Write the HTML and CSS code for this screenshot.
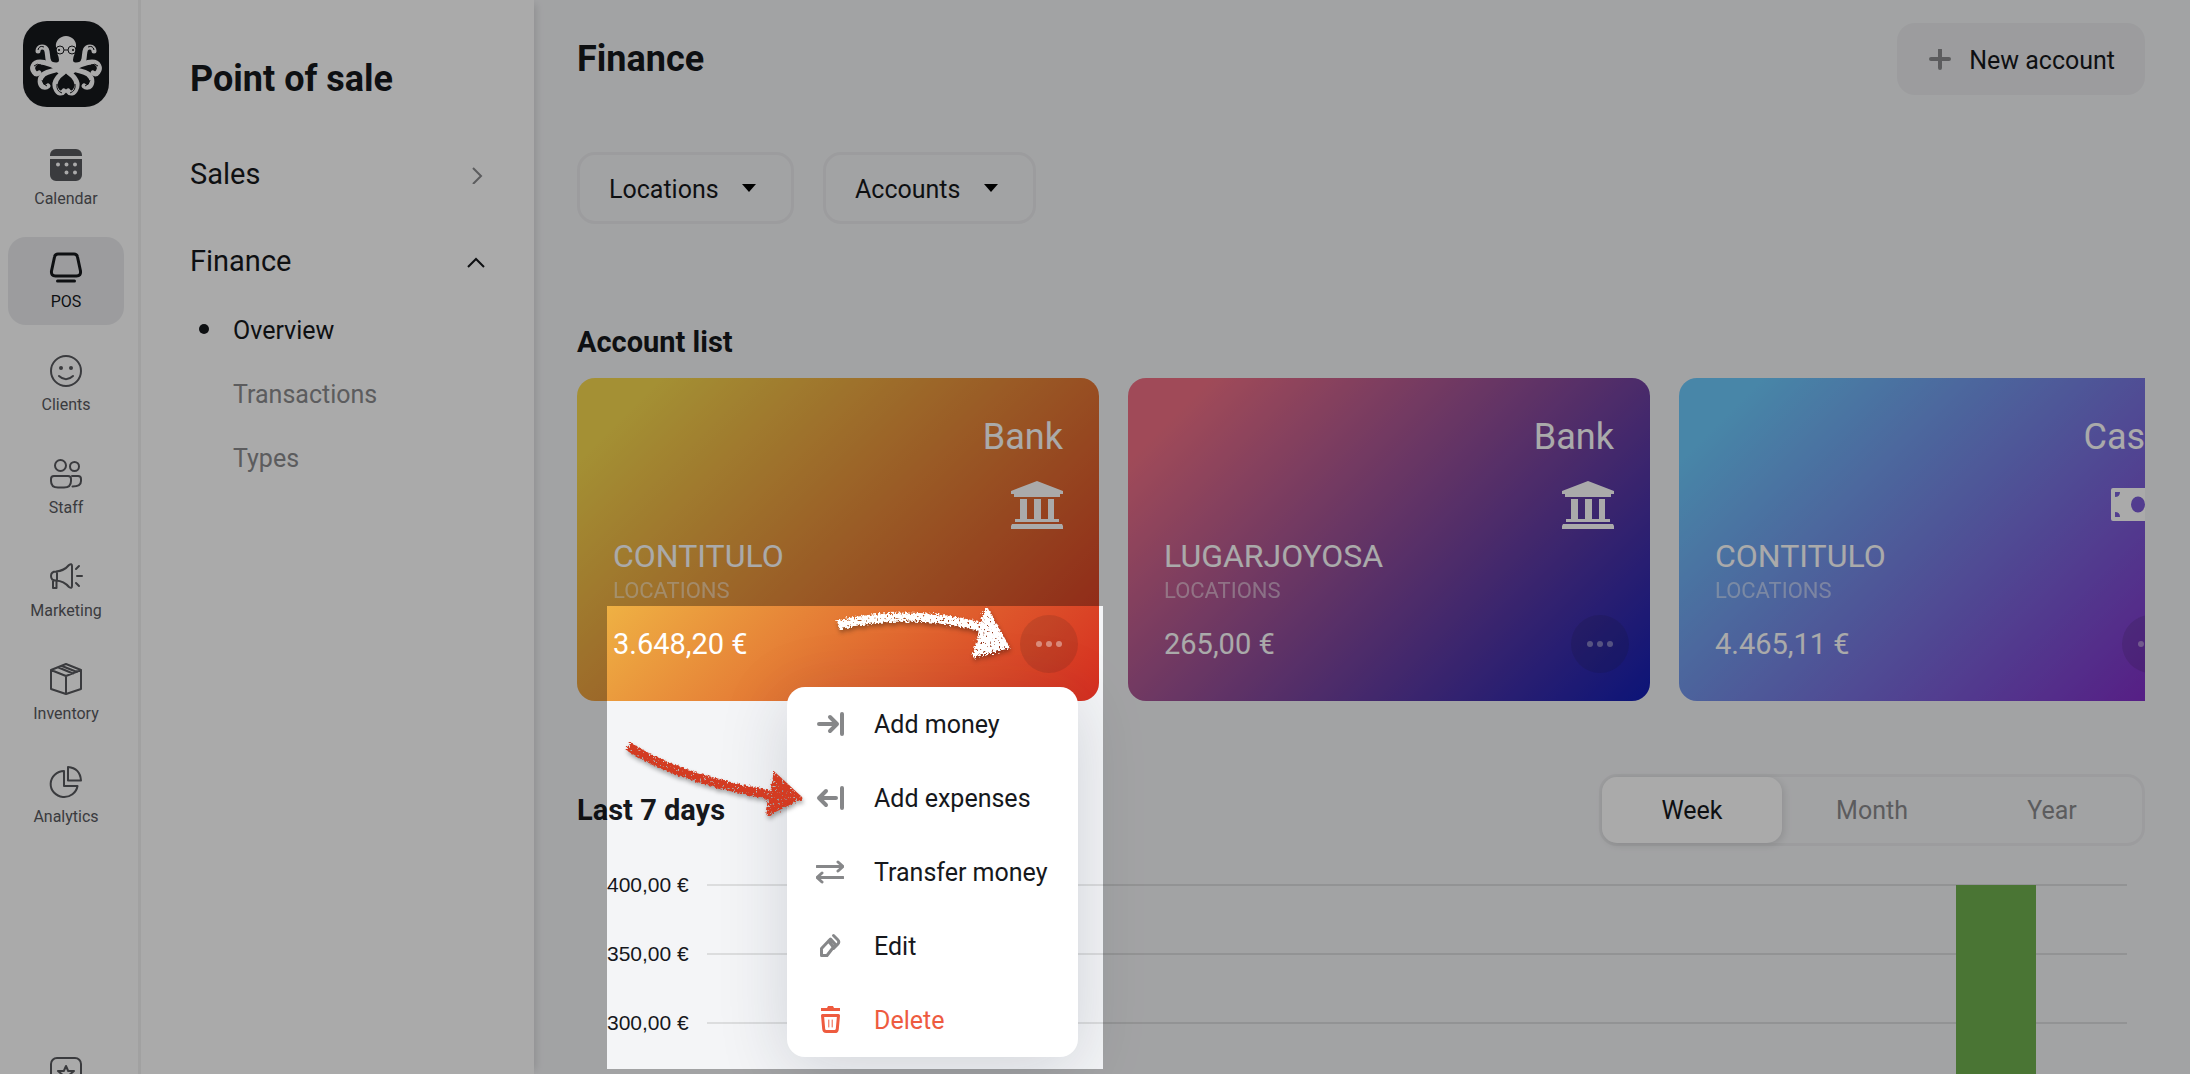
FILE: index.html
```html
<!DOCTYPE html>
<html lang="en">
<head>
    <meta charset="UTF-8">
    <meta name="viewport" content="width=device-width, initial-scale=1.0">
    <title>Finance - Point of sale</title>
    <link rel="stylesheet" href="styles.css">
</head>
<body>
    <div class="app">
        <nav class="rail">
            <a class="logo" href="#" aria-label="Home">
                <svg viewBox="7 7 86 86">
                    <g class="arms">
                        <path d="M46 51C37 51 33 51 32 45C31 39 32 33 26 33C23 33 22 35 22 37"/>
                        <path d="M44 53C35 52 31 48 24 48C17 48 15 54 18 58Q20 61 23 59"/>
                        <path d="M46 55C38 56 33 57 28 60C22 65 24 71 27 73Q30 74 32 72"/>
                        <path d="M48 58C41 63 37 69 40 75C42 80 46 80 48 77"/>
                        <path d="M54 51C63 51 67 51 68 45C69 39 68 33 74 33C77 33 78 35 78 37"/>
                        <path d="M56 53C65 52 69 48 76 48C83 48 85 54 82 58Q80 61 77 59"/>
                        <path d="M54 55C62 56 67 57 72 60C78 65 76 71 73 73Q70 74 68 72"/>
                        <path d="M52 58C59 63 63 69 60 75C58 80 54 80 52 77"/>
                    </g>
                    <path class="head" d="M50 22C44 22 39 27 40 33C40 38 43 42 43 46C43 50 37 49 34 52L43 60L48 61L50 57L52 61L57 60L66 52C63 49 57 50 57 46C57 42 60 38 60 33C61 27 56 22 50 22Z"/>
                    <g class="curls">
                        <path d="M22 36Q23 31 28 33"/>
                        <path d="M78 36Q77 31 72 33"/>
                        <path d="M18 52Q21 49 25 51M82 52Q79 49 75 51"/>
                        <path d="M26 66Q27 71 31 72M74 66Q73 71 69 72"/>
                        <path d="M41 70Q40 77 46 79M59 70Q60 77 54 79"/>
                    </g>
                    <g class="glasses">
                        <circle cx="44" cy="36" r="4"/>
                        <circle cx="56" cy="36" r="4"/>
                        <path d="M48 36h4M38 35l2 0M60 35l2 0"/>
                    </g>
                    <circle cx="43" cy="36" r="1"/>
                    <circle cx="57" cy="36" r="1"/>
                </svg>
            </a>
            <a class="rail-item" href="#">
                <svg class="rail-icon" viewBox="0 0 32 32">
                    <path class="solid" d="M0 7V6a6 6 0 0 1 6-6h20a6 6 0 0 1 6 6v1z"/>
                    <path class="solid" fill-rule="evenodd" d="M0 10h32v16a6 6 0 0 1-6 6H6a6 6 0 0 1-6-6zM8 13.500a2 2 0 1 0 0 4a2 2 0 1 0 0-4M16.500 13.500a2 2 0 1 0 0 4a2 2 0 1 0 0-4M25 13.500a2 2 0 1 0 0 4a2 2 0 1 0 0-4M16.500 21.500a2 2 0 1 0 0 4a2 2 0 1 0 0-4M25 21.500a2 2 0 1 0 0 4a2 2 0 1 0 0-4"/>
                </svg>
                Calendar
            </a>
            <a class="rail-item active" href="#">
                <svg class="rail-icon bold" viewBox="0 0 32 32">
                    <path d="M8 2h16q3 0 3.500 3l3 14q.6 5-4 5h-21q-4.600 0-4-5l3-14Q5 2 8 2z"/>
                    <path d="M7.500 29h17"/>
                </svg>
                POS
            </a>
            <a class="rail-item" href="#">
                <svg class="rail-icon" viewBox="0 0 32 32">
                    <circle cx="16" cy="16" r="15"/>
                    <circle class="solid" cx="11" cy="13" r="2"/>
                    <circle class="solid" cx="21" cy="13" r="2"/>
                    <path d="M9 21q7 6.500 14 0"/>
                </svg>
                Clients
            </a>
            <a class="rail-item" href="#">
                <svg class="rail-icon" viewBox="0 0 32 32">
                    <circle cx="10.500" cy="7.500" r="5.500"/>
                    <circle cx="24.500" cy="8.500" r="4.500"/>
                    <path d="M4 18h14q3 0 3 3v2q0 6.500-7 6.500H8q-7 0-7-6.500v-2q0-3 3-3z"/>
                    <path d="M22 18h6q3 0 3 3v2q0 5.500-8.500 5.500"/>
                </svg>
                Staff
            </a>
            <a class="rail-item" href="#">
                <svg class="rail-icon" viewBox="0 0 32 32">
                    <path d="M6 10.500Q14 10 19 4q3-2 3 1v20q0 3-3 1q-5-6-13-6.500q-5 0-5-4.500t5-4.500zM7 10.500v9M3 20v7h3.500v-7M26 8l3-3M27 15h5M26 22l3 3"/>
                </svg>
                Marketing
            </a>
            <a class="rail-item" href="#">
                <svg class="rail-icon" viewBox="0 0 32 32">
                    <path d="M16 0L31 6v19L16 30L1 25V6zM1 6l15 6L31 6M16 12v18M8.500 3.500L23 9.500M12 2L27 8"/>
                </svg>
                Inventory
            </a>
            <a class="rail-item" href="#">
                <svg class="rail-icon" viewBox="0 0 32 32">
                    <path d="M14 4v15h13.500A13.500 13 0 1 1 14 4zM18 0q12 1 13 13.500H18z"/>
                </svg>
                Analytics
            </a>
            <a class="rail-item rail-last" href="#" aria-label="Favourites">
                <svg class="rail-icon" viewBox="0 0 32 32">
                    <rect x="1" y="1" width="30" height="30" rx="6"/>
                    <path d="M16 9l2.200 5h5.800l-4.500 3.800 1.500 5.600-5-3.200-5 3.200 1.500-5.600L8 14h5.800z"/>
                </svg>
            </a>
        </nav>

        <aside class="sidebar">
            <h2 class="sidebar-title">Point of sale</h2>
            <a class="group" href="#">
                Sales
                <svg class="chevron muted" viewBox="0 0 20 20"><path d="M8 4l8 8-8 8"/></svg>
            </a>
            <a class="group" href="#">
                Finance
                <svg class="chevron" viewBox="0 0 20 20"><path d="M3 16l8-8 8 8"/></svg>
            </a>
            <ul class="sub">
                <li class="current"><a href="#">Overview</a></li>
                <li><a href="#">Transactions</a></li>
                <li><a href="#">Types</a></li>
            </ul>
        </aside>

        <main class="content">
            <header class="top">
                <h1>Finance</h1>
                <button class="new-account" type="button">
                    <svg viewBox="0 0 22 22"><path d="M11 1v18M2 10h18"/></svg>
                    New account
                </button>
            </header>

            <div class="filters">
                <div class="filter">
                    <select aria-label="Locations"><option>Locations</option></select>
                    <svg viewBox="0 0 14 8"><path d="M0 0h14L7 8z"/></svg>
                </div>
                <div class="filter">
                    <select aria-label="Accounts"><option>Accounts</option></select>
                    <svg viewBox="0 0 14 8"><path d="M0 0h14L7 8z"/></svg>
                </div>
            </div>

            <h3>Account list</h3>
            <div class="cards">
                <article class="card gold">
                    <div class="card-type">
                        Bank
                        <svg viewBox="0 0 52 48"><path d="M26 0L52 10v3h-3v3H3v-3H0v-3zM9 18h7v20h7V18h7v20h7V18h6v20h5v3H4v-3h5zM1 43h50l1 2v3H0v-3z"/></svg>
                    </div>
                    <div class="card-name">CONTITULO</div>
                    <div class="card-place">LOCATIONS</div>
                    <div class="card-foot">
                        3.648,20 €
                        <button class="more" type="button" aria-label="More"><i></i><i></i><i></i></button>
                    </div>
                </article>
                <article class="card plum">
                    <div class="card-type">
                        Bank
                        <svg viewBox="0 0 52 48"><path d="M26 0L52 10v3h-3v3H3v-3H0v-3zM9 18h7v20h7V18h7v20h7V18h6v20h5v3H4v-3h5zM1 43h50l1 2v3H0v-3z"/></svg>
                    </div>
                    <div class="card-name">LUGARJOYOSA</div>
                    <div class="card-place">LOCATIONS</div>
                    <div class="card-foot">
                        265,00 €
                        <button class="more" type="button" aria-label="More"><i></i><i></i><i></i></button>
                    </div>
                </article>
                <article class="card sky">
                    <div class="card-type">
                        Cash
                        <svg viewBox="0 0 52 48"><path fill-rule="evenodd" d="M0 7h50q2 0 2 2v29q0 2-2 2H0q-2 0-2-2V9q0-2 2-2zM2 11v5q5 0 5-5zM2 36h5q0-5-5-5zM48 11h-5q0 5 5 5zM48 36v-5q-5 0-5 5zM25 15.500a7 8 0 1 0 0 16a7 8 0 1 0 0-16z"/></svg>
                    </div>
                    <div class="card-name">CONTITULO</div>
                    <div class="card-place">LOCATIONS</div>
                    <div class="card-foot">
                        4.465,11 €
                        <button class="more" type="button" aria-label="More"><i></i><i></i><i></i></button>
                    </div>
                </article>
            </div>

            <div class="period">
                <h3>Last 7 days</h3>
                <div class="switch">
                    <button class="on" type="button">Week</button>
                    <button type="button">Month</button>
                    <button type="button">Year</button>
                </div>
            </div>

            <div class="chart">
                <div class="tick">400,00 €</div>
                <div class="tick">350,00 €</div>
                <div class="tick">300,00 €</div>
                <div class="plot"><div class="bar"></div></div>
            </div>
        </main>

        <div class="menu">
            <button type="button">
                <svg viewBox="0 0 28 28"><path d="M3 14h17M14 7l7 7-7 7M26 4v20"/></svg>
                Add money
            </button>
            <button type="button">
                <svg viewBox="0 0 28 28"><path d="M20 14H3M10 7l-7 7 7 7M26 4v20"/></svg>
                Add expenses
            </button>
            <button type="button">
                <svg class="thin" viewBox="0 0 28 28"><path d="M1 8.500h25M22 4l5 4.500-5 4.500M27 19.500H2M6 15l-5 4.500 5 4.500"/></svg>
                Transfer money
            </button>
            <button type="button">
                <svg class="thin" viewBox="0 0 28 28"><path d="M5.500 23.500v-7l9-9.500 5 5.500-8.500 11zM12.500 9l4 5M17.500 3.500l4 4q2.500 2.500 0 5l-4 4"/></svg>
                Edit
            </button>
            <button class="danger" type="button">
                <svg class="thin" viewBox="0 0 28 28">
                    <path class="fill" d="M5 2h6l1-2h5l1 2h6v3H5z"/>
                    <path d="M6.500 9.500h16l-1.200 13.500q-.2 2.500-2.500 2.500h-8.600q-2.300 0-2.500-2.500z"/>
                    <path class="hair" d="M12.800 14v7M16.200 14v7"/>
                </svg>
                Delete
            </button>
        </div>

        <div class="spotlight"></div>

        <!-- hand drawn arrows -->
        <svg class="arrow to-more" viewBox="0 0 190 60">
            <defs>
                <filter id="chalk" x="-10%" y="-20%" width="120%" height="140%">
                    <feTurbulence type="fractalNoise" baseFrequency="0.45" numOctaves="2" seed="4" result="n"/>
                    <feDisplacementMap in="SourceGraphic" in2="n" scale="7" result="d"/>
                    <feColorMatrix in="n" type="matrix" values="0 0 0 0 0  0 0 0 0 0  0 0 0 0 0  0 -10 0 0 7.400" result="m"/>
                    <feComposite in="d" in2="m" operator="in"/>
                </filter>
            </defs>
            <g filter="url(#chalk)">
                <path class="line" d="M8 25Q80 8 152 27"/>
                <path class="tip" d="M156 8L178 47L144 56Z"/>
            </g>
        </svg>
        <svg class="arrow to-expenses" viewBox="0 0 190 90">
            <g filter="url(#chalk)">
                <path class="line" d="M8 16Q54 47 150 65"/>
                <path class="tip" d="M155 44L181 68L148 84Z"/>
            </g>
        </svg>
    </div>
</body>
</html>
```
FILE: styles.css
```css
* {
    box-sizing: border-box;
}
body {
    margin: 0;
    font-family: Roboto, "Liberation Sans", sans-serif;
    font-size: 25px;
    color: #16181c;
    background: #f4f5f7;
}
a {
    color: inherit;
    text-decoration: none;
}
button, select {
    font: inherit;
    color: inherit;
    border: 0;
    background: none;
    padding: 0;
    cursor: pointer;
}
h1, h2, h3 {
    margin: 0;
    font-weight: bold;
}
h1, h2 {
    font-size: 36px;
    line-height: 42px;
}
h3 {
    font-size: 29px;
    line-height: 36px;
}
.app {
    position: relative;
    display: flex;
    height: 100vh;
    overflow: hidden;
}

/* left icon rail */
.rail {
    flex: none;
    width: 141px;
    display: flex;
    flex-direction: column;
    gap: 15px;
    padding: 21px 14px 0 8px;
    background: #fff;
    border-right: 3px solid #f2f2f2;
    overflow: hidden;
}
.logo {
    flex: none;
    width: 86px;
    height: 86px;
    margin: 0 auto 12px;
    border-radius: 24px;
    background: #16181c;
}
.logo svg {
    display: block;
}
.arms {
    fill: none;
    stroke: #fff;
    stroke-width: 5;
    stroke-linecap: round;
}
.head {
    fill: #fff;
}
.curls, .glasses {
    fill: none;
    stroke: #16181c;
    stroke-width: 1;
}
.rail-item {
    flex: none;
    height: 88px;
    display: flex;
    flex-direction: column;
    align-items: center;
    gap: 8px;
    padding-top: 15px;
    border-radius: 18px;
    font-size: 16px;
    line-height: 20px;
    color: #58595e;
}
.rail-item.active {
    background: #eaebee;
    color: #16181c;
}
.rail-icon {
    width: 32px;
    height: 32px;
    fill: none;
    stroke: currentColor;
    stroke-width: 2;
    stroke-linecap: round;
    stroke-linejoin: round;
    overflow: visible;
}
.rail-icon.bold {
    stroke-width: 3;
}
.rail-icon .solid {
    fill: currentColor;
    stroke: none;
}
.rail-last {
    margin-top: 187px;
}

/* section menu */
.sidebar {
    flex: none;
    width: 393px;
    padding: 58px 49px 0;
    background: #fff;
    box-shadow: 6px 0 8px -4px rgba(0, 0, 0, 0.12);
    z-index: 1;
}
.sidebar-title {
    margin-bottom: 54px;
}
.group {
    display: flex;
    justify-content: space-between;
    align-items: center;
    margin-bottom: 47px;
    font-size: 29px;
    line-height: 40px;
}
.group + .group {
    margin-bottom: 34px;
}
.chevron {
    width: 20px;
    height: 20px;
    fill: none;
    stroke: currentColor;
    stroke-width: 2;
}
.chevron.muted {
    stroke: #8a8b8d;
}
.sub {
    display: flex;
    flex-direction: column;
    gap: 32px;
    margin: 0;
    padding: 0 0 0 43px;
    list-style: none;
    line-height: 32px;
    color: #8a8b8d;
}
.sub .current {
    position: relative;
    color: #16181c;
}
.sub .current::before {
    content: "";
    position: absolute;
    left: -34px;
    top: 9px;
    width: 10px;
    height: 10px;
    border-radius: 50%;
    background: currentColor;
}

/* content */
.content {
    flex: 1;
    min-width: 0;
    display: flex;
    flex-direction: column;
    padding: 23px 45px 0 43px;
}
.top, .period {
    display: flex;
    justify-content: space-between;
    align-items: center;
}
.new-account {
    display: flex;
    align-items: center;
    gap: 18px;
    height: 72px;
    padding: 2px 30px 0 32px;
    border-radius: 18px;
    background: #eaebed;
}
.new-account svg {
    width: 22px;
    height: 22px;
    stroke: #8a8b8d;
    stroke-width: 4;
    stroke-linecap: round;
}
.filters {
    display: flex;
    gap: 29px;
    margin: 57px 0 100px;
}
.filter {
    position: relative;
}
.filter select {
    height: 72px;
    padding: 2px 72px 0 29px;
    border: 3px solid #eaebed;
    border-radius: 18px;
    appearance: none;
}
.filter svg {
    position: absolute;
    right: 38px;
    top: 32px;
    width: 14px;
    height: 8px;
    pointer-events: none;
}
.cards {
    display: flex;
    gap: 29px;
    margin: 18px 0 73px;
    overflow: hidden;
}
.card {
    flex: none;
    width: 522px;
    height: 323px;
    display: flex;
    flex-direction: column;
    padding: 38px 21px 0 36px;
    border-radius: 18px;
    color: #fff;
}
.gold {
    background: linear-gradient(135deg, #f6d84e 10%, #d62d20);
}
.plum {
    background: linear-gradient(135deg, #f07085 10%, #121eb4);
}
.sky {
    background: linear-gradient(135deg, #6cc9fc 10%, #8322c4);
}
.card-type {
    display: flex;
    flex-direction: column;
    align-items: flex-end;
    gap: 23px;
    padding-right: 15px;
    font-size: 36px;
    line-height: 42px;
}
.card-type svg {
    width: 52px;
    height: 48px;
    fill: currentColor;
    overflow: visible;
}
.card-name {
    margin-top: 7px;
    font-size: 32px;
    line-height: 40px;
}
.card-place {
    font-size: 22px;
    line-height: 30px;
    opacity: 0.5;
}
.card-foot {
    display: flex;
    justify-content: space-between;
    align-items: center;
    margin-top: 9px;
    font-size: 29px;
    line-height: 58px;
}
.more {
    width: 58px;
    height: 58px;
    display: flex;
    align-items: center;
    justify-content: center;
    gap: 4px;
    border-radius: 50%;
    background: rgba(22, 24, 28, 0.12);
}
.more i {
    width: 6px;
    height: 6px;
    border-radius: 50%;
    background: #fff;
    opacity: 0.4;
}
.switch {
    display: flex;
    width: 546px;
    height: 72px;
    border: 3px solid #eaebed;
    border-radius: 18px;
    color: #8a8b8d;
}
.switch button {
    flex: 1;
    border-radius: 15px;
}
.switch .on {
    background: #fff;
    color: #16181c;
    box-shadow: 2px 2px 8px rgba(0, 0, 0, 0.12);
}

/* chart */
.chart {
    position: relative;
    flex: 1;
    margin-top: 4px;
    padding: 0 18px 0 30px;
    font-family: "Liberation Sans", sans-serif;
    font-size: 21px;
}
.tick {
    display: flex;
    align-items: center;
    gap: 18px;
    height: 69px;
}
.tick::after {
    content: "";
    flex: 1;
    height: 2px;
    background: #dcddde;
}
.plot {
    position: absolute;
    inset: 35px 18px 0 129px;
}
.bar {
    height: 100%;
    width: 80px;
    margin-left: 88%;
    background: #6fb04e;
}

/* account menu */
.menu {
    position: absolute;
    left: 787px;
    top: 687px;
    width: 291px;
    border-radius: 18px;
    background: #fff;
    box-shadow: 0 12px 70px rgba(22, 40, 60, 0.16);
}
.menu button {
    display: flex;
    align-items: center;
    gap: 30px;
    width: 100%;
    height: 74px;
    padding-left: 29px;
    border-radius: 18px;
}
.menu svg {
    width: 28px;
    height: 28px;
    fill: none;
    stroke: #868789;
    stroke-width: 4;
    stroke-linecap: round;
    stroke-linejoin: round;
}
.menu svg.thin {
    stroke-width: 3;
}
.menu .danger {
    color: #ee5b3f;
}
.menu .danger svg {
    stroke: currentColor;
    overflow: visible;
}
.menu .fill {
    fill: currentColor;
    stroke: none;
}
.menu .hair {
    stroke-width: 1;
}

/* dims everything but the highlighted area */
.spotlight {
    position: absolute;
    z-index: 2;
    left: 607px;
    top: 606px;
    width: 496px;
    height: 463px;
    box-shadow: 0 0 0 9999px rgba(0, 0, 0, 0.333);
    pointer-events: none;
}
.arrow {
    position: absolute;
    z-index: 3;
    pointer-events: none;
    filter: drop-shadow(1px 3px 2px rgba(0, 0, 0, 0.35));
}
.arrow .line {
    fill: none;
    stroke: currentColor;
    stroke-width: 9;
}
.arrow .tip {
    fill: currentColor;
    stroke: currentColor;
    stroke-width: 3;
    stroke-linejoin: round;
}
.to-more {
    left: 830px;
    top: 600px;
    width: 190px;
    height: 60px;
    color: #fff;
}
.to-expenses {
    left: 620px;
    top: 730px;
    width: 190px;
    height: 90px;
    color: #d33a20;
}
```
